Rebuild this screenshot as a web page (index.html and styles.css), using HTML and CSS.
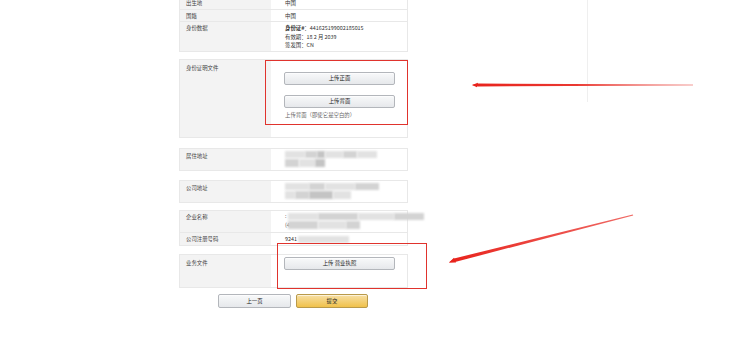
FILE: index.html
```html
<!DOCTYPE html>
<html lang="zh-CN">
<head>
<meta charset="utf-8">
<title>身份证明</title>
<link rel="stylesheet" href="styles.css">
</head>
<body>
<div class="page">
  <div class="form">
    <div class="tbl first">
      <div class="row r12"><div class="lab">出生地</div><div class="val">中国</div></div>
      <div class="row r12"><div class="lab">国籍</div><div class="val">中国</div></div>
      <div class="row r30"><div class="lab">身份数据</div><div class="val"><b>身份证#</b>：441625199002185015<br>有效期：18 2 月 2039<br>签发国：CN</div></div>
    </div>

    <div class="tbl sec-id">
      <div class="row r77"><div class="lab lab-pad">身份证明文件</div>
        <div class="val upl">
          <button class="btn b1">上传正面</button>
          <button class="btn b2">上传背面</button>
          <div class="hint">上传背面（即使它是空白的）</div>
        </div>
      </div>
    </div>

    <div class="tbl sec-addr">
      <div class="row r21"><div class="lab lab-pad3">居住地址</div>
        <div class="val blurv">
          <div class="blurline"><i class="bl g2 w20"></i><i class="bl g1 w12"></i><i class="bl g3 w8"></i><i class="bl g2 w18"></i><i class="bl g1 w14"></i><i class="bl g2 w20"></i></div>
          <div class="blurline"><i class="bl g1 w14"></i><i class="bl g2 w16"></i><i class="bl g3 w10"></i></div>
        </div>
      </div>
    </div>

    <div class="tbl sec-comp">
      <div class="row r21"><div class="lab lab-pad3">公司地址</div>
        <div class="val blurv">
          <div class="blurline"><i class="bl g2 w24"></i><i class="bl g1 w16"></i><i class="bl g2 w30"></i><i class="bl g1 w24"></i></div>
          <div class="blurline"><i class="bl g2 w10"></i><i class="bl g1 w14"></i><i class="bl g3 w24"></i><i class="bl g2 w18"></i></div>
        </div>
      </div>
    </div>

    <div class="tbl sec-ent">
      <div class="row r21"><div class="lab">企业名称</div>
        <div class="val blurv ent">
          <div class="blurline"><span class="ch">:</span><i class="bl g2 w30"></i><i class="bl g1 w40"></i><i class="bl g2 w36"></i><i class="bl g1 w30"></i></div>
          <div class="blurline"><span class="ch">(4</span><i class="bl g1 w30"></i><i class="bl g2 w28"></i><i class="bl g1 w14"></i></div>
        </div>
      </div>
      <div class="row r13"><div class="lab">公司注册号码</div><div class="val">9241<i class="bl g2 w51 inl"></i></div></div>
    </div>

    <div class="tbl sec-biz">
      <div class="row r32"><div class="lab lab-pad">业务文件</div>
        <div class="val upl2"><button class="btn b3">上传 营业执照</button></div>
      </div>
    </div>

    <div class="actions">
      <button class="btn prev">上一页</button>
      <button class="btn submit">提交</button>
    </div>
  </div>

  <div class="vline"></div>
  <div class="redbox box1"></div>
  <div class="redbox box2"></div>

  <svg class="arrows" width="750" height="359" viewBox="0 0 750 359">
    <defs>
      <linearGradient id="fade1" x1="472" y1="0" x2="693" y2="0" gradientUnits="userSpaceOnUse">
        <stop offset="0" stop-color="#e8231c"/>
        <stop offset="0.5" stop-color="#ea3a33"/>
        <stop offset="1" stop-color="#f29c98"/>
      </linearGradient>
      <linearGradient id="fade2" x1="449" y1="262" x2="633" y2="215" gradientUnits="userSpaceOnUse">
        <stop offset="0" stop-color="#e8231c"/>
        <stop offset="1" stop-color="#ef6a65"/>
      </linearGradient>
    </defs>
    <polygon points="693,84.6 693,85.4 478,86.5 472,85 478,83.5" fill="url(#fade1)"/>
    <polygon points="472,85 478,82.8 477,87.2" fill="#e8231c"/>
    <polygon points="632.8,214.6 633.2,215.4 455,262 449,262.5 454,258.5" fill="url(#fade2)"/>
    <polygon points="449,262.5 454,257.8 456,262.6" fill="#e8231c"/>
  </svg>
</div>
</body>
</html>
```

FILE: styles.css
```css
* { box-sizing: border-box; }
html, body { margin: 0; padding: 0; background: #fff; }
body {
  font-family: "Noto Sans CJK SC", "Noto Sans", "Liberation Sans", sans-serif;
  color: #333;
  font-size: 5.4px;
  width: 750px;
  height: 359px;
  overflow: hidden;
}
.page { position: relative; width: 750px; height: 359px; overflow: hidden; }

.form {
  width: 229px;
  margin-left: 179px;
  margin-top: -4px;
  display: flex;
  flex-direction: column;
}

.tbl {
  border: 1px solid #e8e8e8;
  background: #fff;
}
.row {
  display: grid;
  grid-template-columns: 91px 1fr;
  border-top: 1px solid #e8e8e8;
  line-height: 8.5px;
  overflow: visible;
}
.row:first-child { border-top: 0; }
.lab {
  background: #f3f3f3;
  color: #444;
  padding: 2px 6px 0;
}
.val {
  padding: 2px 14px 0;
  color: #333;
  white-space: nowrap;
}
.val b { font-weight: 700; }
.r12 { height: 12px; }
.r30 { height: 30px; }
.r77 { height: 77px; }
.r21 { height: 21px; }
.r13 { height: 13px; }
.r32 { height: 32px; }
.lab-pad { padding-top: 4px; }
.lab-pad3 { padding-top: 3px; }

.sec-id { margin-top: 7px; }
.sec-addr { margin-top: 10px; }
.sec-comp { margin-top: 9px; }
.sec-ent { margin-top: 7px; }
.sec-biz { margin-top: 8px; }

.upl { padding: 12px 12px 0 13px; display: flex; flex-direction: column; align-items: flex-start; }
.upl2 { padding: 2px 12px 0 13px; }

.btn {
  font-family: "Noto Sans CJK SC", "Noto Sans", "Liberation Sans", sans-serif;
  font-size: 5.4px;
  color: #222;
  width: 111px;
  height: 13px;
  padding: 0;
  border: 1px solid #b3b6bb;
  border-radius: 2px;
  background: linear-gradient(#f8f9fa, #e6e8eb);
  box-shadow: inset 0 1px 0 rgba(255,255,255,.6);
  line-height: 11px;
}
.b2 { margin-top: 10px; }
.hint { color: #666; margin-top: 3px; line-height: 8px; padding-left: 1px; }

.blurv { padding-top: 1px; }
.blurline { display: flex; align-items: center; height: 8.5px; }
.bl {
  display: inline-block;
  height: 7.5px;
  filter: blur(1px);
}
.g1 { background: #d3d3d3; }
.g2 { background: #e2e2e2; }
.g3 { background: #c4c4c4; }
.w8 { width: 8px; } .w10 { width: 10px; } .w12 { width: 12px; } .w14 { width: 14px; }
.w16 { width: 16px; } .w18 { width: 18px; } .w20 { width: 20px; } .w24 { width: 24px; }
.w28 { width: 28px; } .w30 { width: 30px; } .w36 { width: 36px; } .w40 { width: 40px; }
.w51 { width: 51px; }
.inl { vertical-align: middle; height: 7px; margin-left: 1px; }
.ent .ch { color: #555; width: 3px; display: inline-block; }

.actions {
  display: flex;
  gap: 5px;
  margin-top: 6px;
  padding-left: 39px;
}
.prev { width: 73px; height: 14px; line-height: 12px; }
.submit {
  width: 72px; height: 14px; line-height: 12px;
  border-color: #b99a4a;
  background: linear-gradient(#f7dfa5, #f0c14b);
}

.vline {
  position: absolute;
  left: 587px;
  top: 0;
  width: 1px;
  height: 102px;
  background: #efefef;
}
.redbox {
  position: absolute;
  border: 1.5px solid #e0332d;
  pointer-events: none;
}
.box1 { left: 265px; top: 60px; width: 143px; height: 65px; }
.box2 { left: 277px; top: 243px; width: 150px; height: 46px; }
.arrows { position: absolute; left: 0; top: 0; pointer-events: none; }
```
